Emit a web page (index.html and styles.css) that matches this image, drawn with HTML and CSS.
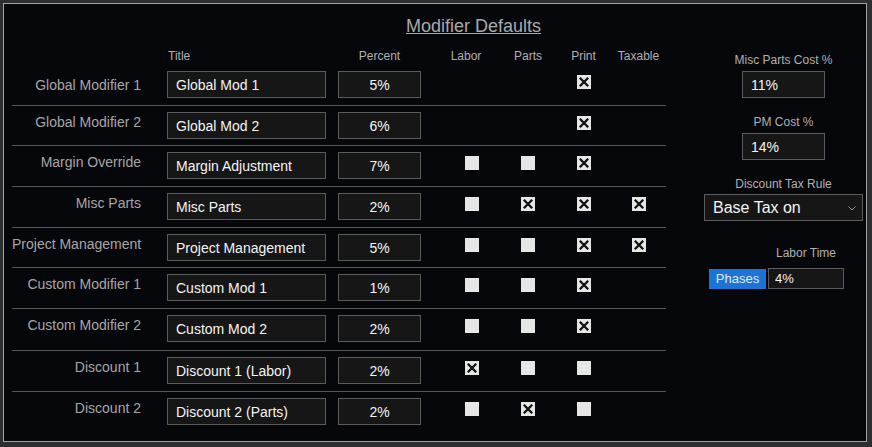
FILE: index.html
```html
<!DOCTYPE html>
<html lang="en">
<head>
    <meta charset="UTF-8">
    <meta name="viewport" content="width=device-width, initial-scale=1.0">
    <title>Modifier Defaults</title>
    <link rel="stylesheet" href="styles.css">
</head>
<body>
    <div class="panel">
        <h1 class="panel-title">Modifier Defaults</h1>

        <div class="panel-body">
            <div class="modifier-table">
                <div class="table-head">
                    <span></span>
                    <span class="head-title">Title</span>
                    <span class="head-percent">Percent</span>
                    <span class="head-labor">Labor</span>
                    <span>Parts</span>
                    <span>Print</span>
                    <span>Taxable</span>
                </div>

                <div class="modifier-row first">
                    <label class="row-label">Global Modifier 1</label>
                    <input class="title-input" value="Global Mod 1">
                    <input class="percent-input" value="5%">
                    <span></span>
                    <span></span>
                    <span class="chk on"><svg viewBox="0 0 14 14"><path d="M2.8 2.8L11.2 11.2M11.2 2.8L2.8 11.2"/></svg></span>
                    <span></span>
                </div>

                <div class="modifier-row short">
                    <label class="row-label">Global Modifier 2</label>
                    <input class="title-input" value="Global Mod 2">
                    <input class="percent-input" value="6%">
                    <span></span>
                    <span></span>
                    <span class="chk on"><svg viewBox="0 0 14 14"><path d="M2.8 2.8L11.2 11.2M11.2 2.8L2.8 11.2"/></svg></span>
                    <span></span>
                </div>

                <div class="modifier-row">
                    <label class="row-label">Margin Override</label>
                    <input class="title-input" value="Margin Adjustment">
                    <input class="percent-input" value="7%">
                    <span class="chk"></span>
                    <span class="chk"></span>
                    <span class="chk on"><svg viewBox="0 0 14 14"><path d="M2.8 2.8L11.2 11.2M11.2 2.8L2.8 11.2"/></svg></span>
                    <span></span>
                </div>

                <div class="modifier-row">
                    <label class="row-label">Misc Parts</label>
                    <input class="title-input" value="Misc Parts">
                    <input class="percent-input" value="2%">
                    <span class="chk"></span>
                    <span class="chk on"><svg viewBox="0 0 14 14"><path d="M2.8 2.8L11.2 11.2M11.2 2.8L2.8 11.2"/></svg></span>
                    <span class="chk on"><svg viewBox="0 0 14 14"><path d="M2.8 2.8L11.2 11.2M11.2 2.8L2.8 11.2"/></svg></span>
                    <span class="chk on"><svg viewBox="0 0 14 14"><path d="M2.8 2.8L11.2 11.2M11.2 2.8L2.8 11.2"/></svg></span>
                </div>

                <div class="modifier-row short">
                    <label class="row-label">Project Management</label>
                    <input class="title-input" value="Project Management">
                    <input class="percent-input" value="5%">
                    <span class="chk"></span>
                    <span class="chk"></span>
                    <span class="chk on"><svg viewBox="0 0 14 14"><path d="M2.8 2.8L11.2 11.2M11.2 2.8L2.8 11.2"/></svg></span>
                    <span class="chk on"><svg viewBox="0 0 14 14"><path d="M2.8 2.8L11.2 11.2M11.2 2.8L2.8 11.2"/></svg></span>
                </div>

                <div class="modifier-row">
                    <label class="row-label">Custom Modifier 1</label>
                    <input class="title-input" value="Custom Mod 1">
                    <input class="percent-input" value="1%">
                    <span class="chk"></span>
                    <span class="chk"></span>
                    <span class="chk on"><svg viewBox="0 0 14 14"><path d="M2.8 2.8L11.2 11.2M11.2 2.8L2.8 11.2"/></svg></span>
                    <span></span>
                </div>

                <div class="modifier-row tall">
                    <label class="row-label">Custom Modifier 2</label>
                    <input class="title-input" value="Custom Mod 2">
                    <input class="percent-input" value="2%">
                    <span class="chk"></span>
                    <span class="chk"></span>
                    <span class="chk on"><svg viewBox="0 0 14 14"><path d="M2.8 2.8L11.2 11.2M11.2 2.8L2.8 11.2"/></svg></span>
                    <span></span>
                </div>

                <div class="modifier-row">
                    <label class="row-label">Discount 1</label>
                    <input class="title-input" value="Discount 1 (Labor)">
                    <input class="percent-input" value="2%">
                    <span class="chk on"><svg viewBox="0 0 14 14"><path d="M2.8 2.8L11.2 11.2M11.2 2.8L2.8 11.2"/></svg></span>
                    <span class="chk"></span>
                    <span class="chk"></span>
                    <span></span>
                </div>

                <div class="modifier-row last">
                    <label class="row-label">Discount 2</label>
                    <input class="title-input" value="Discount 2 (Parts)">
                    <input class="percent-input" value="2%">
                    <span class="chk"></span>
                    <span class="chk on"><svg viewBox="0 0 14 14"><path d="M2.8 2.8L11.2 11.2M11.2 2.8L2.8 11.2"/></svg></span>
                    <span class="chk"></span>
                    <span></span>
                </div>
            </div>

            <div class="side-settings">
                <div class="side-label">Misc Parts Cost %</div>
                <input class="side-input" value="11%">

                <div class="side-label spaced">PM Cost %</div>
                <input class="side-input" value="14%">

                <div class="side-label spaced">Discount Tax Rule</div>
                <div class="select-wrap">
                    <select class="tax-select">
                        <option>Base Tax on</option>
                    </select>
                    <svg class="select-arrow" viewBox="0 0 8 5"><path d="M0.5 0.5L4 4L7.5 0.5"/></svg>
                </div>

                <div class="labor-group">
                    <span class="labor-label">Labor Time</span>
                    <button class="phases-button">Phases</button>
                    <input class="labor-input" value="4%">
                </div>
            </div>
        </div>
    </div>
</body>
</html>
```

FILE: styles.css
```css
body {
    margin: 0;
    background: #2c2e30;
    font-family: "Liberation Sans", Arial, sans-serif;
}

.panel {
    margin: 3px;
    width: 864px;
    height: 439px;
    box-sizing: border-box;
    border: 1px solid #a3a3a3;
    background: #06070b;
    padding: 11px 0 0 8px;
}

.panel-title {
    margin: 0 0 12px 394px;
    font-size: 18px;
    font-weight: normal;
    line-height: 22px;
    color: #a9a9a9;
    text-decoration: underline;
}

.panel-body {
    display: flex;
    align-items: flex-start;
    gap: 38px;
}

/* table on the left */

.modifier-table {
    width: 654px;
}

.table-head,
.modifier-row {
    display: grid;
    grid-template-columns: 155px 171px 105px 57px 56px 55px 55px;
    align-items: start;
}

.table-head {
    height: 16px;
    font-size: 12px;
    line-height: 14px;
    color: #b0b0b0;
    justify-items: center;
}

.table-head .head-title {
    justify-self: start;
    padding-left: 1px;
}

.table-head .head-percent {
    justify-self: start;
    width: 83px;
    text-align: center;
}

.table-head .head-labor {
    padding-right: 11px;
}

.modifier-row {
    padding: 6px 0 7px;
    border-bottom: 1px solid #575757;
    justify-items: center;
}

.modifier-row.short {
    padding-bottom: 6px;
}

.modifier-row.tall {
    padding-bottom: 8px;
}

.modifier-row.last {
    border-bottom: none;
}

.row-label {
    justify-self: stretch;
    padding: 2px 26px 0 0;
    text-align: right;
    font-size: 14px;
    line-height: 16px;
    color: #a6a6a6;
    white-space: nowrap;
}

.modifier-row.first .row-label {
    padding-top: 6px;
}

.title-input,
.percent-input,
.side-input,
.labor-input {
    box-sizing: border-box;
    height: 27px;
    margin: 0;
    border: 1px solid #5b5b5b;
    background: #161616;
    color: #f4f4f4;
    font-family: "Liberation Sans", Arial, sans-serif;
    font-size: 14px;
    outline: none;
}

.title-input {
    justify-self: start;
    width: 159px;
    padding: 0 8px;
}

.percent-input {
    justify-self: start;
    width: 83px;
    padding: 0;
    text-align: center;
}

.chk {
    display: block;
    width: 14px;
    height: 14px;
    margin-top: 4px;
    background: #e6e6e6;
}

.chk svg {
    display: block;
    width: 14px;
    height: 14px;
    fill: none;
    stroke: #111111;
    stroke-width: 2.3;
}

/* settings on the right */

.side-settings {
    width: 159px;
    margin-top: 4px;
    display: flex;
    flex-direction: column;
    align-items: center;
}

.side-label {
    font-size: 12px;
    line-height: 14px;
    color: #b0b0b0;
    margin-bottom: 4px;
}

.side-label.spaced {
    margin-top: 17px;
}

.side-input {
    width: 83px;
    padding: 0 8px;
}

.select-wrap {
    position: relative;
    width: 159px;
    margin-top: -1px;
}

.tax-select {
    display: block;
    box-sizing: border-box;
    width: 159px;
    height: 27px;
    margin: 0;
    padding: 0 0 0 8px;
    border: 1px solid #5b5b5b;
    border-radius: 0;
    background: #161616;
    color: #f4f4f4;
    font-family: "Liberation Sans", Arial, sans-serif;
    font-size: 16px;
    appearance: none;
    outline: none;
}

.select-arrow {
    position: absolute;
    right: 7px;
    top: 12px;
    width: 8px;
    height: 5px;
    fill: none;
    stroke: #9a9a9a;
    stroke-width: 1;
}

.labor-group {
    align-self: flex-start;
    margin: 25px 0 0 5px;
    display: grid;
    grid-template-columns: 57px 76px;
    column-gap: 2px;
    align-items: center;
}

.labor-label {
    grid-column: 2;
    justify-self: center;
    font-size: 12px;
    line-height: 14px;
    color: #b0b0b0;
    margin-bottom: 8px;
}

.phases-button {
    grid-column: 1;
    height: 20px;
    margin: 0;
    padding: 0;
    border: none;
    background: #1b74d6;
    color: #e4e8f2;
    font-family: "Liberation Sans", Arial, sans-serif;
    font-size: 13px;
}

.labor-input {
    height: 21px;
    padding: 0 6px;
    font-size: 13px;
}
```
